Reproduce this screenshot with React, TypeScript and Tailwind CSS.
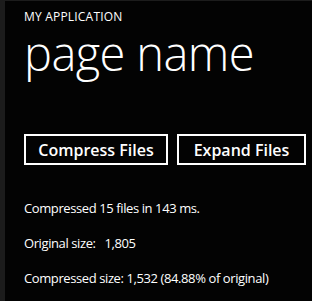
export default function App() {
  return (
    <div className="w-[312px] h-[301px] bg-[#1c1c1c] pt-px pl-[5px] overflow-hidden" style={{ fontFamily: '"Open Sans", "Noto Sans", sans-serif' }}>
      <div className="w-full h-full bg-[#030303] text-white pl-[19px]">
        <div className="pt-[9px] text-[12px] leading-[14px] tracking-[0.2px]">MY APPLICATION</div>
        <div className="mt-[7px] text-[47px] leading-[44px] font-light tracking-[-0.6px]">page name</div>
        <div className="flex gap-[9px] mt-[59px]">
          <button className="w-[144px] h-[31px] border-2 border-white text-[16px] font-semibold flex items-center justify-center">Compress Files</button>
          <button className="w-[129px] h-[31px] border-2 border-white text-[16px] font-semibold flex items-center justify-center">Expand Files</button>
        </div>
        <div className="mt-[35px] text-[13px] leading-[16px] tracking-[-0.4px] flex flex-col gap-[19px]">
          <div>Compressed 15 files in 143 ms.</div>
          <div>Original size:&nbsp;&nbsp; 1,805</div>
          <div>Compressed size: 1,532 (84.88% of original)</div>
        </div>
      </div>
    </div>
  );
}
